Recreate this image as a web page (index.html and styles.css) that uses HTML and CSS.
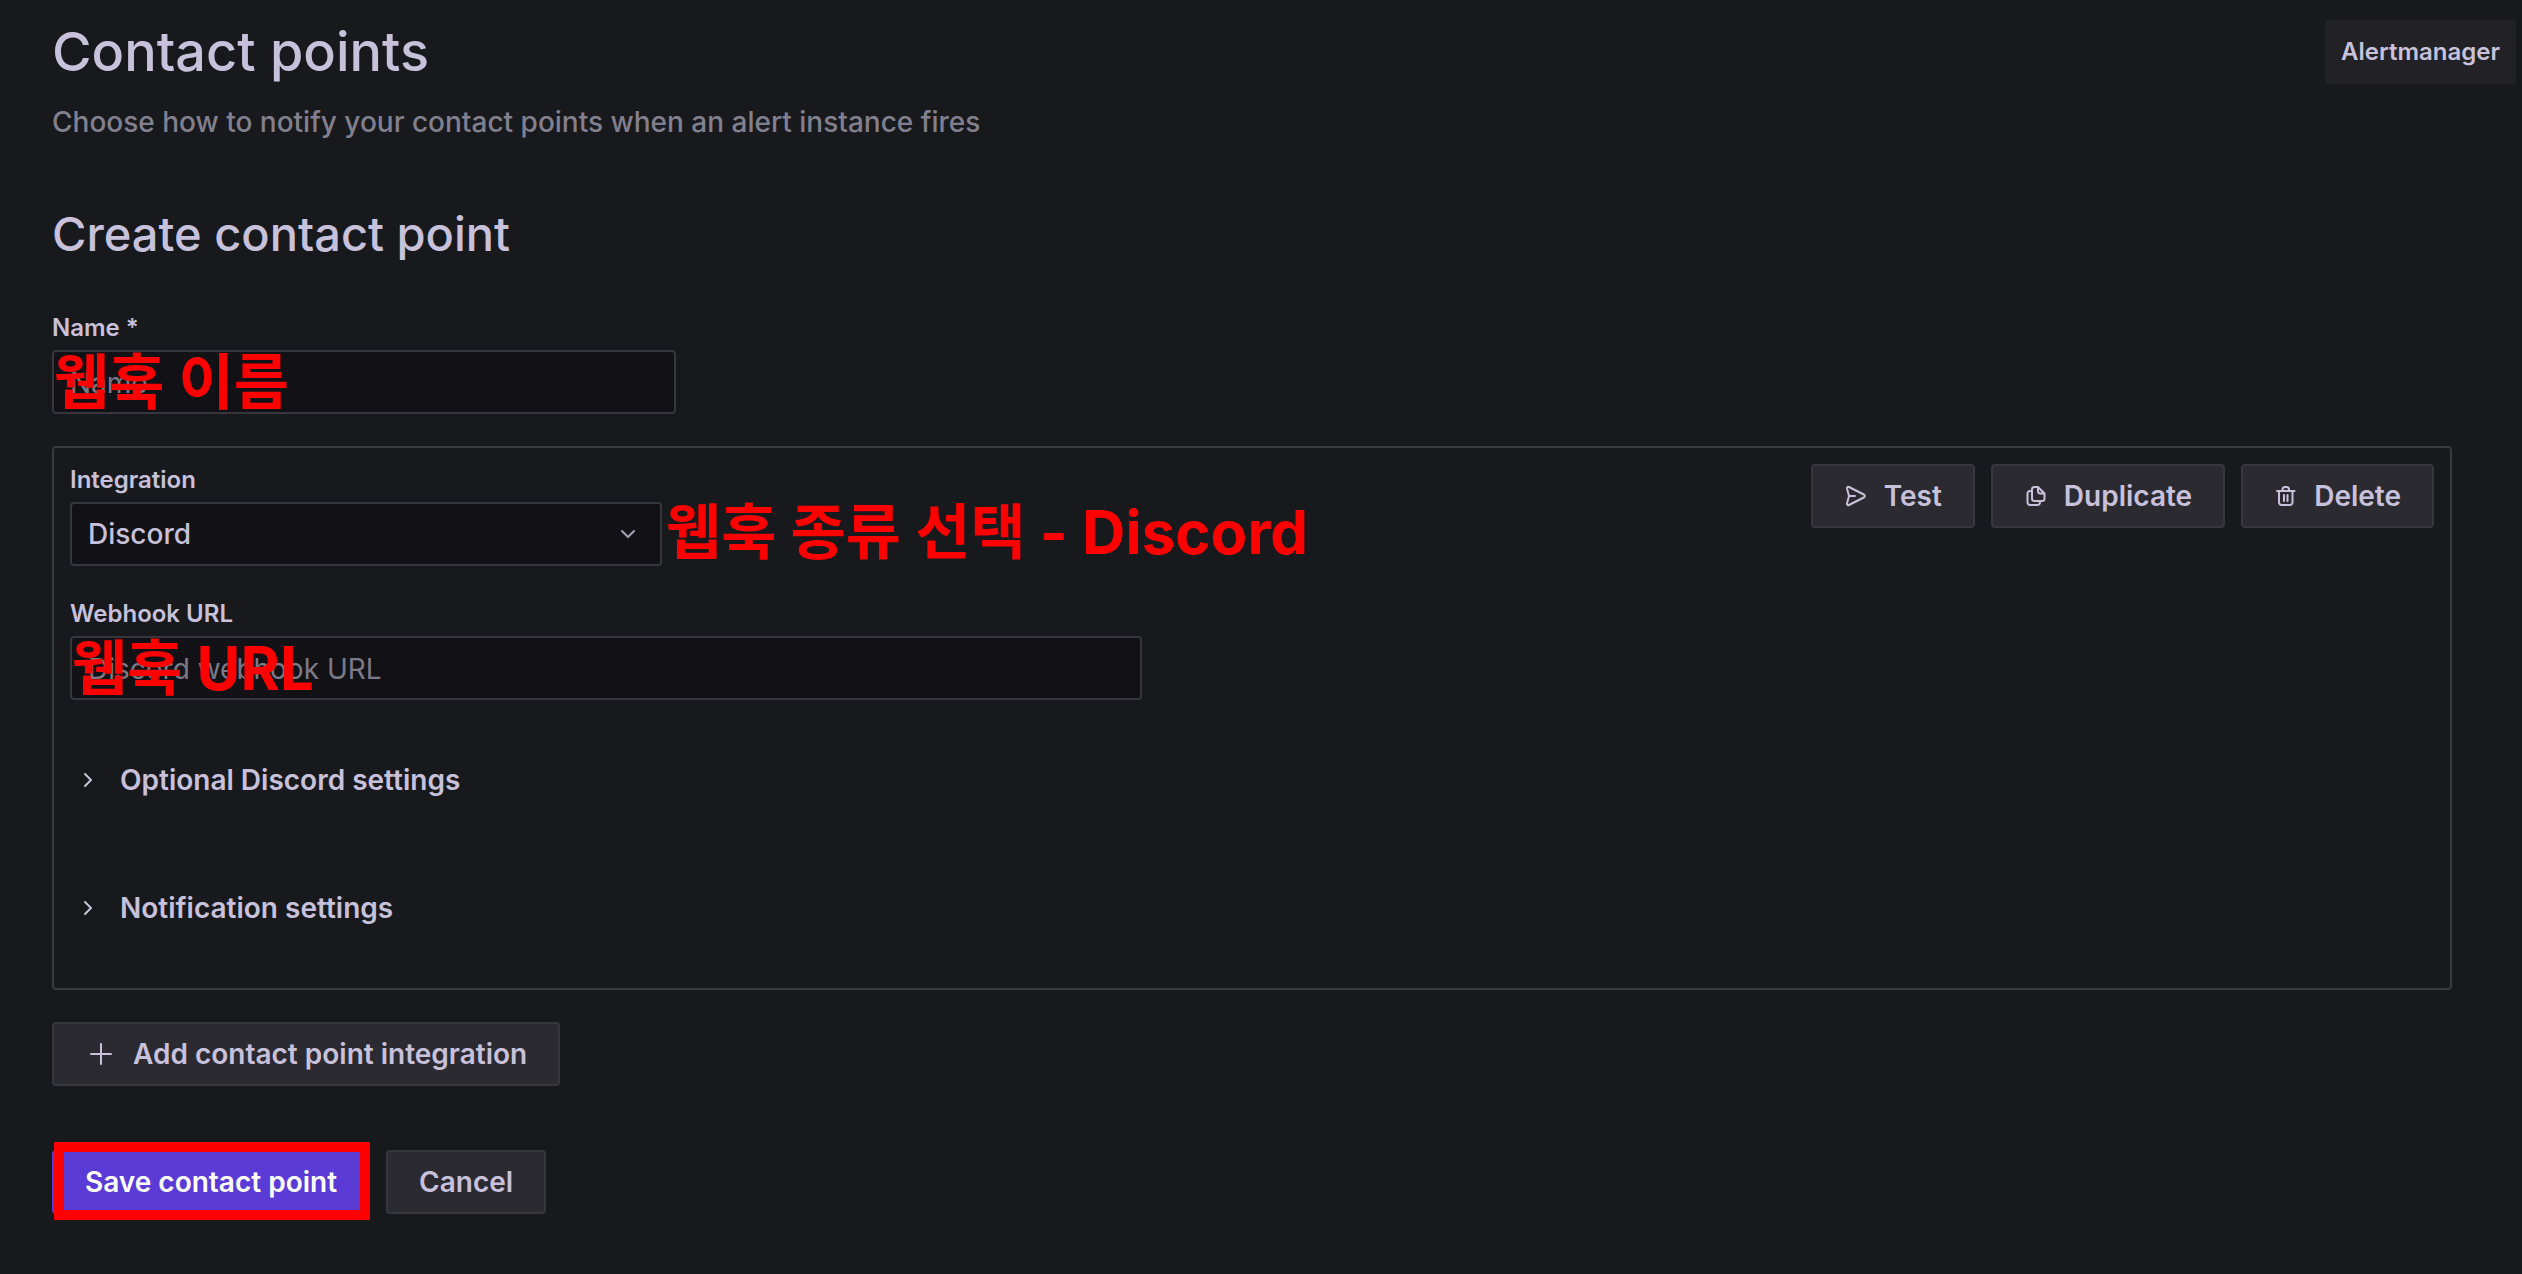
FILE: index.html
```html
<!DOCTYPE html>
<html lang="en">

<head>
  <meta charset="UTF-8">
  <meta name="viewport" content="width=device-width, initial-scale=1">
  <title>Contact points</title>
  <link rel="stylesheet" href="styles.css">
</head>

<body>

  <header class="page-header">
    <div>
      <h1>Contact points</h1>
      <p class="subtitle">Choose how to notify your contact points when an alert instance fires</p>
    </div>
    <span class="alertmanager">Alertmanager</span>
  </header>

  <main>
    <form class="contact-form">
      <h2>Create contact point</h2>

      <div class="field field-name">
        <label for="name">Name *</label>
        <div class="control">
          <input type="text" id="name" placeholder="Name">
          <span class="note note-over" lang="ko">웹훅 이름</span>
        </div>
      </div>

      <section class="integration">
        <div class="integration-top">
          <div class="field field-type">
            <label for="type">Integration</label>
            <div class="control">
              <select id="type">
                <option>Discord</option>
              </select>
              <svg class="select-arrow" viewBox="0 0 32 32" aria-hidden="true"><path d="M10 13 16 19 22 13"/></svg>
              <span class="note note-beside" lang="ko">웹훅 종류 선택 - Discord</span>
            </div>
          </div>
          <div class="actions">
            <button type="button" class="btn">
              <svg class="icon" viewBox="0 0 24 24" aria-hidden="true"><path d="M3 4.500C2.700 3 3.800 2.400 5 3L19.800 10.500C21.200 11.300 21.200 12.700 19.800 13.500L5 21C3.800 21.600 2.700 21 3 19.500L5 12ZM5 12H11"/></svg>
              Test
            </button>
            <button type="button" class="btn">
              <svg class="icon" viewBox="0 0 24 24" aria-hidden="true"><path d="M14 3H10.500A2.500 2.500 0 0 0 8 5.500V14.500A2.500 2.500 0 0 0 10.500 17H18A2.500 2.500 0 0 0 20.500 14.500V9.500ZM14 3V7A2.500 2.500 0 0 0 16.500 9.500H20.500M8 7H6A2.500 2.500 0 0 0 3.500 9.500V18.500A2.500 2.500 0 0 0 6 21H13.500A2.500 2.500 0 0 0 16 18.500V17"/></svg>
              Duplicate
            </button>
            <button type="button" class="btn">
              <svg class="icon" viewBox="0 0 24 24" aria-hidden="true"><path d="M3 7H20.500M8.500 7V5.500A2.500 2.500 0 0 1 11 3H12.500A2.500 2.500 0 0 1 15 5.500V7M5 7V18.500A2.500 2.500 0 0 0 7.500 21H16A2.500 2.500 0 0 0 18.500 18.500V7M10 11V17M13.500 11V17"/></svg>
              Delete
            </button>
          </div>
        </div>

        <div class="field field-url">
          <label for="url">Webhook URL</label>
          <div class="control">
            <input type="text" id="url" placeholder="Discord webhook URL">
            <span class="note note-over" lang="ko">웹훅 URL</span>
          </div>
        </div>

        <div class="sections">
          <button type="button" class="toggle" aria-expanded="false">
            <svg class="toggle-arrow" viewBox="0 0 32 32" aria-hidden="true"><path d="M13 10 19 16 13 22"/></svg>
            Optional Discord settings
          </button>
          <button type="button" class="toggle" aria-expanded="false">
            <svg class="toggle-arrow" viewBox="0 0 32 32" aria-hidden="true"><path d="M13 10 19 16 13 22"/></svg>
            Notification settings
          </button>
        </div>
      </section>

      <button type="button" class="btn">
        <svg class="icon icon-plus" viewBox="0 0 32 32" aria-hidden="true"><path d="M16 6V26M6 16H26"/></svg>
        Add contact point integration
      </button>

      <div class="form-footer">
        <div class="save">
          <button type="submit" class="btn btn-primary">Save contact point</button>
        </div>
        <button type="button" class="btn">Cancel</button>
      </div>
    </form>
  </main>

</body>

</html>
```

FILE: styles.css
```css
* {
  box-sizing: border-box;
}

body {
  margin: 0;
  background-color: #18191d;
  color: #c7c1db;
  font-family: Inter, "Noto Sans CJK KR", sans-serif;
  font-size: 28px;
  line-height: 44px;
}

h1,
h2,
p {
  margin: 0;
  font-weight: 500;
}

h1 {
  font-size: 54px;
  line-height: 64px;
}

h2 {
  margin-bottom: 52px;
  font-size: 47px;
  line-height: 52px;
}

/* HEADER */

.page-header {
  display: flex;
  justify-content: space-between;
  align-items: flex-start;
  padding: 20px 6px 0 52px;
}

.subtitle {
  margin-top: 16px;
  color: #82808f;
}

.alertmanager {
  padding: 16px;
  border-radius: 4px;
  background-color: #222126;
  font-size: 24px;
  font-weight: 600;
  line-height: 32px;
}

/* FORM */

.contact-form {
  padding: 64px 70px 60px 52px;
}

label {
  display: block;
  margin-bottom: 6px;
  font-size: 24px;
  font-weight: 600;
  line-height: 32px;
}

.control {
  position: relative;
}

input,
select {
  display: block;
  width: 100%;
  height: 64px;
  padding: 2px 16px 0;
  border: 2px solid #36363c;
  border-radius: 4px;
  background-color: #121216;
  color: inherit;
  font: inherit;
}

select {
  appearance: none;
  padding-top: 0;
  font-weight: 500;
}

input::placeholder {
  color: #7c7a88;
  opacity: 1;
}

.field-name {
  max-width: 624px;
}

.field-type {
  flex: 0 1 592px;
}

.field-url {
  max-width: 1072px;
  margin-top: 32px;
}

svg {
  fill: none;
  stroke: currentColor;
  stroke-width: 2;
  stroke-linecap: round;
  stroke-linejoin: round;
}

.select-arrow {
  position: absolute;
  top: 16px;
  right: 18px;
  width: 32px;
  height: 32px;
  color: #a5a0b6;
  pointer-events: none;
}

/* RED NOTES */

.note {
  position: absolute;
  top: 0;
  color: #ff0000;
  font-size: 60px;
  font-weight: 700;
  line-height: 60px;
  white-space: nowrap;
  pointer-events: none;
}

.note-over {
  top: 2px;
  left: 2px;
}

.note-beside {
  left: 100%;
  margin-left: 4px;
}

/* INTEGRATION */

.integration {
  margin: 32px 0;
  padding: 16px 16px 48px;
  border: 2px solid #3a3a3f;
  border-radius: 4px;
}

.integration-top {
  display: flex;
  justify-content: space-between;
  align-items: flex-start;
}

.actions {
  display: flex;
  gap: 16px;
}

.sections {
  display: flex;
  flex-direction: column;
  align-items: flex-start;
  gap: 64px;
  margin-top: 48px;
}

.toggle {
  display: flex;
  align-items: center;
  gap: 16px;
  height: 64px;
  padding: 0 2px;
  border: 0;
  background: none;
  color: inherit;
  font: inherit;
  font-weight: 600;
  cursor: pointer;
}

.toggle-arrow {
  width: 32px;
  height: 32px;
}

/* BUTTONS */

.btn {
  display: inline-flex;
  align-items: center;
  gap: 16px;
  height: 64px;
  padding: 0 31px;
  border: 2px solid #36363b;
  border-radius: 4px;
  background-color: #2c2a31;
  color: inherit;
  font: inherit;
  font-weight: 600;
  white-space: nowrap;
  cursor: pointer;
}

.btn-primary {
  border-color: #5b3bd5;
  background-color: #5b3bd5;
  color: #ffffff;
}

.icon {
  width: 24px;
  height: 24px;
}

.icon-plus {
  width: 32px;
  height: 32px;
}

.form-footer {
  display: flex;
  gap: 16px;
  margin-top: 64px;
}

.save {
  position: relative;
}

.save::after {
  content: "";
  position: absolute;
  inset: -8px 0 -6px 2px;
  border: 10px solid #ff0000;
  pointer-events: none;
}
```
